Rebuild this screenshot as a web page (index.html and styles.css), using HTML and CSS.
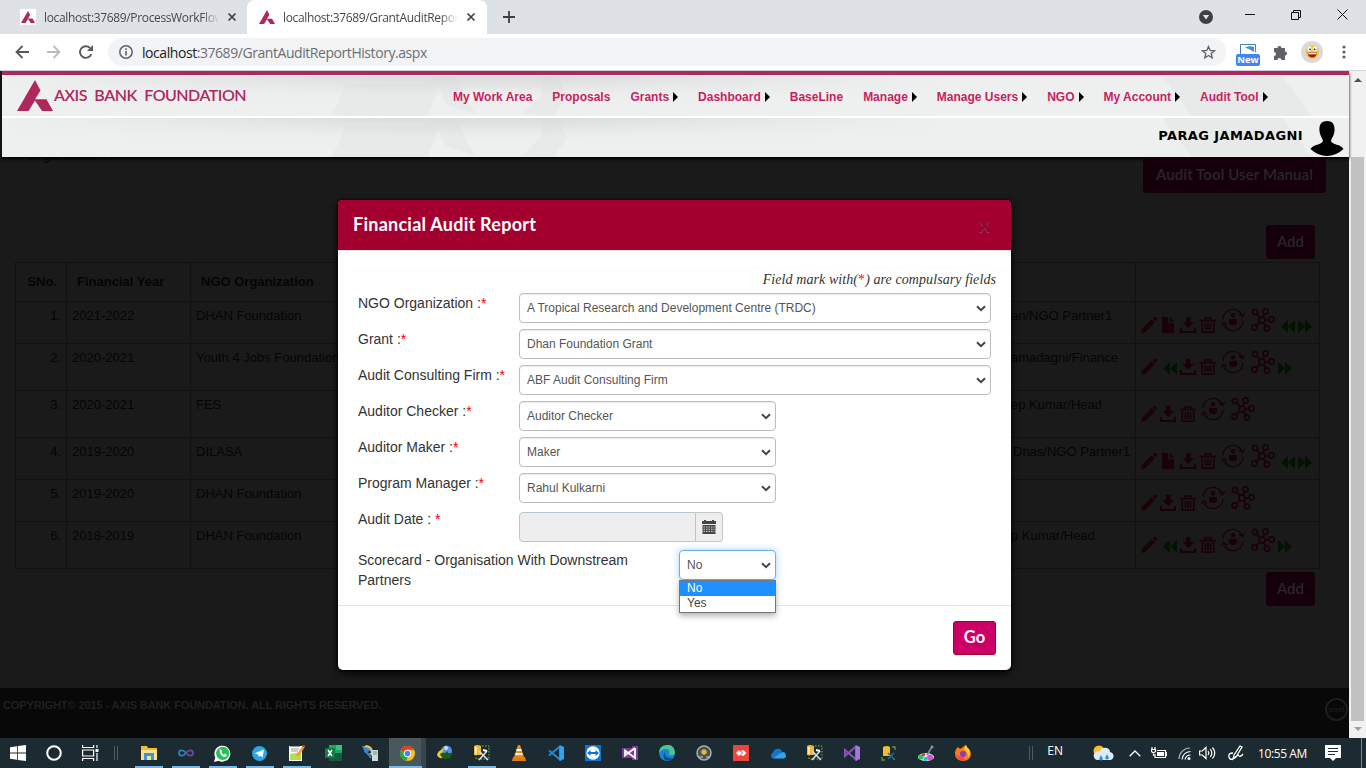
FILE: index.html
```html
<!DOCTYPE html>
<html lang="en">
<head>
<meta charset="utf-8">
<title>Grant Audit Report History</title>
<link rel="stylesheet" href="styles.css">
</head>
<body>
<svg class="defs" aria-hidden="true">
  <symbol id="axis" viewBox="0 0 36 31"><path fill="#ae285d" d="M18 0l5.500 10.500L18 19.200h11.500L36 31H25l-7-10.500L11.500 31H0z"/></symbol>
  <symbol id="x" viewBox="0 0 10 10"><path d="M1.500 1.500l7 7m0-7l-7 7" stroke="#3c4043" stroke-width="1.700"/></symbol>
  <symbol id="chev" viewBox="0 0 10 7"><path d="M1 1.200l4 4 4-4" fill="none" stroke="#444" stroke-width="2"/></symbol>
  <symbol id="pencil" viewBox="0 0 16 16"><path fill="#190404" d="M0 16l1.200-4.500L10.800 2l3.200 3.200L4.500 14.800zM11.800 1.200L13 0h2l1 1v2l-1.200 1.300z"/></symbol>
  <symbol id="doc" viewBox="0 0 12 16"><path fill="#1a000b" d="M0 0h6v6h6v10H0zM7.500 0L12 4.600H7.500z"/></symbol>
  <symbol id="down" viewBox="0 0 16 16"><path fill="#1a000b" d="M6 0h4.500v5H14L8.300 11 2.500 5H6zM0 11h2v3h12v-3h2v5H0z"/></symbol>
  <symbol id="trash" viewBox="0 0 16 16"><path fill="none" stroke="#1a000b" stroke-width="1.700" d="M0 3.700h16M5 3V1h6v2M2.200 5v10.200h11.600V5M5.500 6v7M8 6v7M10.500 6v7"/></symbol>
  <symbol id="cycle" viewBox="0 0 24 24"><path fill="none" stroke="#1a000b" stroke-width="1.300" d="M2 11A10 10 0 0121 7M22 13A10 10 0 013 17M18 6l3.500 2.500L24 5M0 18l2.500-3.500L6 17"/><circle cx="12" cy="7.300" r="2.200" fill="#1a000b"/><path fill="#1a000b" d="M8 11h8v4l-2 2H10l-2-2z"/></symbol>
  <symbol id="net" viewBox="0 0 24 24"><g fill="none" stroke="#1a000b" stroke-width="1.600"><circle cx="11" cy="12" r="3"/><circle cx="4" cy="4" r="2.600"/><circle cx="14.500" cy="3.500" r="2.600"/><circle cx="20.500" cy="11.500" r="2.600"/><circle cx="16" cy="20.500" r="2.600"/><circle cx="3.500" cy="19.500" r="2.600"/><path d="M6 6l3 4M13.500 6L12 9M14 12h4M12.500 15l2.500 3M9 14l-4 4"/></g></symbol>
  <symbol id="ff" viewBox="0 0 14 13"><path fill="#001400" d="M0 0l7 6.500L0 13zM7 0l7 6.500L7 13z"/></symbol>
  <symbol id="rw" viewBox="0 0 14 13"><path fill="#001400" d="M14 0L7 6.500 14 13zM7 0L0 6.500 7 13z"/></symbol>
  <symbol id="dbtool" viewBox="0 0 16 16"><path fill="#e9b940" d="M0 1q3-2 7 0v9H0z"/><path fill="#ffe9a5" d="M1 2h2v7H1z"/><path fill="none" stroke="#7bc143" stroke-dasharray="1.500" d="M8 1h7v13H2v-4"/><path d="M5 6l9 9M13 6l-8 9" stroke="#d6dde4" stroke-width="1.600"/><path d="M9 5l4 1" stroke="#fff" stroke-width="2"/></symbol>
</svg>

<div class="tabstrip">
  <div class="tab idle"><span class="fav"><svg width="14" height="12"><use href="#axis"/></svg></span><span class="tab-text">localhost:37689/ProcessWorkFlow</span><svg class="tab-x" width="10" height="10"><use href="#x"/></svg></div>
  <div class="tab active"><span class="fav"><svg width="16" height="14"><use href="#axis"/></svg></span><span class="tab-text">localhost:37689/GrantAuditReport</span><svg class="tab-x" width="10" height="10"><use href="#x"/></svg></div>
  <svg class="plus" width="12" height="12" viewBox="0 0 12 12"><path d="M6 0v12M0 6h12" stroke="#3c4043" stroke-width="1.800"/></svg>
  <div class="winbtns">
    <svg width="14" height="14" viewBox="0 0 14 14"><circle cx="7" cy="7" r="7" fill="#3c4043"/><path d="M3.800 5h6.400L7 9.500z" fill="#dee1e6"/></svg>
    <svg width="10" height="10" viewBox="0 0 10 10"><path d="M0 4.500h10" stroke="#111"/></svg>
    <svg width="10" height="10" viewBox="0 0 10 10"><path fill="none" stroke="#111" d="M.5 2.500h7v7h-7zM2.500 2.500v-2h7v7h-2"/></svg>
    <svg width="11" height="11" viewBox="0 0 11 11"><path d="M.5.5l10 10m0-10l-10 10" stroke="#111"/></svg>
  </div>
</div>
<div class="toolbar">
  <svg class="nav-ic" width="14" height="14" viewBox="0 0 14 14"><path d="M14 7H1.500M7.500 1l-6 6 6 6" fill="none" stroke="#55585d" stroke-width="1.800"/></svg>
  <svg class="nav-ic" width="14" height="14" viewBox="0 0 14 14"><path d="M0 7h12.500M6.500 1l6 6-6 6" fill="none" stroke="#babcbe" stroke-width="1.800"/></svg>
  <svg class="nav-ic" width="14" height="14" viewBox="0 0 14 14"><path d="M12.300 9A5.800 5.800 0 1111 3" fill="none" stroke="#55585d" stroke-width="1.900"/><path d="M14 0v6H8z" fill="#55585d"/></svg>
  <div class="omnibox">
    <svg width="14" height="14" viewBox="0 0 14 14"><circle cx="7" cy="7" r="6.200" fill="none" stroke="#5f6368" stroke-width="1.500"/><path d="M7 6v4.500M7 3.300v1.600" stroke="#5f6368" stroke-width="1.600"/></svg>
    <span class="url"><b>localhost</b>:37689/GrantAuditReportHistory.aspx</span>
    <svg class="star" width="15" height="14" viewBox="0 0 15 14"><path d="M7.500 1.500l1.700 4 4.300.3-3.300 2.800 1 4.200-3.700-2.300-3.700 2.300 1-4.200L1.500 5.800l4.300-.3z" fill="none" stroke="#5f6368" stroke-width="1.300"/></svg>
  </div>
  <div class="ext"><svg width="16" height="10" viewBox="0 0 16 10"><path d="M.5 10V.5h15V8" fill="#fff" stroke="#3986b8"/><path d="M5 3.500q5-2 9-.5v5Q10 5 5 3.500z" fill="#4a90c0"/></svg><span class="new">New</span></div>
  <svg class="puzzle" width="15" height="15" viewBox="0 0 15 15"><path fill="#5f6368" d="M1 3h3.500a2 2 0 114 0H12v3.500a2 2 0 110 4V15H8.500a1.900 1.900 0 10-4 0H1v-4a1.800 1.800 0 100-4z"/></svg>
  <svg class="avatar" width="22" height="22" viewBox="0 0 22 22"><circle cx="11" cy="11" r="11" fill="#d9d9dc"/><circle cx="11.300" cy="11.300" r="6.800" fill="#f5c73e"/><ellipse cx="8.500" cy="8" rx="2" ry="2.400" fill="#fff"/><ellipse cx="14" cy="8" rx="2" ry="2.400" fill="#fff"/><circle cx="9" cy="8.400" r=".8"/><circle cx="13.700" cy="8.400" r=".8"/><path d="M6.500 11.500h9.500q-.6 5-4.700 5t-4.800-5z" fill="#9b1717"/><path d="M7.200 11.800h8.200v1.500H7.200z" fill="#fff"/></svg>
  <svg class="dots" width="4" height="14" viewBox="0 0 4 14"><g fill="#5f6368"><circle cx="2" cy="2" r="1.600"/><circle cx="2" cy="7" r="1.600"/><circle cx="2" cy="12" r="1.600"/></g></svg>
</div>

<div class="viewport">
  <main class="page">
    <header class="site">
      <div class="band top">
        <svg class="facets" width="1347" height="40"><g fill="#d5d5d5" opacity=".22"><path d="M344 8h76L440 0l-14 40H330zM433 0h20l20 38-30-10zM520 38l20-20V0h15l10 20-13 20zM1160 0h120l30 40H1190z"/></g></svg>
        <svg class="logo" width="36" height="31"><use href="#axis"/></svg>
        <span class="brand">AXIS BANK FOUNDATION</span>
        <nav class="menu">
          <a>My Work Area</a><a>Proposals</a><a class="sub">Grants</a><a class="sub">Dashboard</a><a>BaseLine</a><a class="sub">Manage</a><a class="sub">Manage Users</a><a class="sub">NGO</a><a class="sub">My Account</a><a class="sub">Audit Tool</a>
        </nav>
      </div>
      <div class="band bottom">
        <svg class="facets" width="1347" height="39"><g fill="#d5d5d5" opacity=".22"><path d="M344 8h76L440 0l-14 39H330zM433 0h20l20 38-30-10zM520 38l20-20V0h15l10 20-13 19zM1160 0h120l30 39H1190z"/></g></svg>
        <span class="user">PARAG JAMADAGNI</span>
        <svg class="person" width="34" height="36" viewBox="0 0 34 36"><path d="M17 1c6 0 8 4 7.500 10-.4 5-3 7-3.500 10 1 4 10 3 12.500 8Q26 36 17 36T.5 29C3 24 12 25 13 21c-.5-3-3-5-3.500-10C9 5 11 1 17 1z"/></svg>
      </div>
    </header>
    <section class="content">
      <div class="subhead"><span class="org">Organization :</span><span class="dbtn manual">Audit Tool User Manual</span></div>
      <div class="addrow"><span class="dbtn">Add</span></div>
      <div class="grid">
        <div class="row head"><span class="no">SNo.</span><span class="yr">Financial Year</span><span class="ngo">NGO Organization</span><span class="who"></span><span class="act"></span></div>
        <div class="row short"><span class="no">1.</span><span class="yr">2021-2022</span><span class="ngo">DHAN Foundation</span><span class="who">an/NGO Partner1</span><span class="act"><svg class="i"><use href="#pencil"/></svg><svg class="i"><use href="#doc"/></svg><svg class="i"><use href="#down"/></svg><svg class="i"><use href="#trash"/></svg><svg class="big"><use href="#cycle"/></svg><svg class="big"><use href="#net"/></svg><svg class="seek"><use href="#rw"/></svg><svg class="seek"><use href="#ff"/></svg></span></div>
        <div class="row tall"><span class="no">2.</span><span class="yr">2020-2021</span><span class="ngo">Youth 4 Jobs Foundation</span><span class="who">amadagni/Finance</span><span class="act"><svg class="i"><use href="#pencil"/></svg><svg class="seek in"><use href="#rw"/></svg><svg class="i"><use href="#down"/></svg><svg class="i"><use href="#trash"/></svg><svg class="big"><use href="#cycle"/></svg><svg class="big tight"><use href="#net"/></svg><svg class="seek"><use href="#ff"/></svg></span></div>
        <div class="row tall"><span class="no">3.</span><span class="yr">2020-2021</span><span class="ngo">FES</span><span class="who">ep Kumar/Head</span><span class="act"><svg class="i"><use href="#pencil"/></svg><svg class="i"><use href="#down"/></svg><svg class="i"><use href="#trash"/></svg><svg class="big"><use href="#cycle"/></svg><svg class="big"><use href="#net"/></svg></span></div>
        <div class="row short"><span class="no">4.</span><span class="yr">2019-2020</span><span class="ngo">DILASA</span><span class="who dhas">Dhas/NGO Partner1</span><span class="act"><svg class="i"><use href="#pencil"/></svg><svg class="i"><use href="#doc"/></svg><svg class="i"><use href="#down"/></svg><svg class="i"><use href="#trash"/></svg><svg class="big"><use href="#cycle"/></svg><svg class="big"><use href="#net"/></svg><svg class="seek"><use href="#rw"/></svg><svg class="seek"><use href="#ff"/></svg></span></div>
        <div class="row short"><span class="no">5.</span><span class="yr">2019-2020</span><span class="ngo">DHAN Foundation</span><span class="who"></span><span class="act"><svg class="i"><use href="#pencil"/></svg><svg class="i"><use href="#down"/></svg><svg class="i"><use href="#trash"/></svg><svg class="big"><use href="#cycle"/></svg><svg class="big"><use href="#net"/></svg></span></div>
        <div class="row tall"><span class="no">6.</span><span class="yr">2018-2019</span><span class="ngo">DHAN Foundation</span><span class="who last">p Kumar/Head</span><span class="act"><svg class="i"><use href="#pencil"/></svg><svg class="seek in"><use href="#rw"/></svg><svg class="i"><use href="#down"/></svg><svg class="i"><use href="#trash"/></svg><svg class="big"><use href="#cycle"/></svg><svg class="big tight"><use href="#net"/></svg><svg class="seek"><use href="#ff"/></svg></span></div>
      </div>
      <div class="addrow low"><span class="dbtn">Add</span></div>
    </section>
    <footer class="foot"><span>COPYRIGHT© 2015 - AXIS BANK FOUNDATION. ALL RIGHTS RESERVED.</span><i class="seal">pixel</i></footer>

    <div class="modal">
      <div class="modal-head"><h1>Financial Audit Report</h1><span class="close">x</span></div>
      <div class="modal-body">
        <p class="hint">Field mark with(<em>*</em>) are compulsary fields</p>
        <div class="field"><label>NGO Organization :<em>*</em></label><div class="sel wide">A Tropical Research and Development Centre (TRDC)<svg width="10" height="7"><use href="#chev"/></svg></div></div>
        <div class="field"><label>Grant :<em>*</em></label><div class="sel wide">Dhan Foundation Grant<svg width="10" height="7"><use href="#chev"/></svg></div></div>
        <div class="field"><label>Audit Consulting Firm :<em>*</em></label><div class="sel wide">ABF Audit Consulting Firm<svg width="10" height="7"><use href="#chev"/></svg></div></div>
        <div class="field"><label>Auditor Checker :<em>*</em></label><div class="sel">Auditor Checker<svg width="10" height="7"><use href="#chev"/></svg></div></div>
        <div class="field"><label>Auditor Maker :<em>*</em></label><div class="sel">Maker<svg width="10" height="7"><use href="#chev"/></svg></div></div>
        <div class="field"><label>Program Manager :<em>*</em></label><div class="sel">Rahul Kulkarni<svg width="10" height="7"><use href="#chev"/></svg></div></div>
        <div class="field date"><label>Audit Date : <em>*</em></label><div class="dateinput"></div><div class="cal"><svg width="14" height="14" viewBox="0 0 14 14"><path fill="#444" d="M0 1h2V0h2v1h6V0h2v1h2v3H0zM.5 5h13v9H.5z"/><path d="M1.500 7h11M1.500 9.200h11M1.500 11.400h11" stroke="#ddd" stroke-width="1" stroke-dasharray="1.500 1"/></svg></div></div>
        <div class="field score"><label>Scorecard - Organisation With Downstream Partners</label><div class="pick"><div class="sel focus">No<svg width="10" height="7"><use href="#chev"/></svg></div><div class="options"><div class="opt on">No</div><div class="opt">Yes</div></div></div></div>
      </div>
      <div class="modal-foot"><span class="go">Go</span></div>
    </div>
  </main>
  <div class="scrollbar"><svg width="8" height="4" viewBox="0 0 8 4"><path d="M0 4l4-4 4 4z" fill="#505050"/></svg><div class="thumb"></div><svg width="8" height="4" viewBox="0 0 8 4"><path d="M0 0l4 4 4-4z" fill="#a0a0a0"/></svg></div>
</div>

<div class="taskbar">
  <div class="cell sys"><svg width="16" height="16" viewBox="0 0 16 16"><path fill="#fff" d="M0 2.200l7-1v6.400H0zM7.800 1.100L16 0v7.600H7.800zM0 8.400h7v6.400l-7-1zM7.800 8.400H16V16l-8.200-1.100z"/></svg></div>
  <div class="cell sys"><svg width="16" height="16" viewBox="0 0 16 16"><circle cx="8" cy="8" r="6.800" fill="none" stroke="#fff" stroke-width="2"/></svg></div>
  <div class="cell sys"><svg width="17" height="16" viewBox="0 0 17 16"><path fill="none" stroke="#fff" stroke-width="1.200" d="M.6 0v2.500h11V0M.6 5h11v6H.6zM.6 16v-2.500h11V16M15 0v3M15 8v8"/><path fill="#fff" d="M13.500 4h3v3h-3z"/></svg></div>
  <div class="sep"></div>
  <div class="cell run"><svg width="16" height="16" viewBox="0 0 16 16"><path fill="#f5b83d" d="M0 1h6l1 2h9v12H0z"/><path fill="#ffe08a" d="M0 5h16v10H0z"/><path fill="#3a96dd" d="M3 8h10v7h-3v-4H6v4H3z"/></svg></div>
  <div class="cell run"><svg width="16" height="16" viewBox="0 0 16 16"><path d="M8 8C5 4 1 5 1 8s4 4 7 0" fill="none" stroke="#2f7fc4" stroke-width="1.800"/><path d="M8 8c3-4 7-3 7 0s-4 4-7 0" fill="none" stroke="#70479f" stroke-width="1.800"/></svg></div>
  <div class="cell run"><svg width="17" height="17" viewBox="0 0 17 17"><path fill="#fff" d="M0 17l1.300-4.500a8 8 0 113.200 3.200z"/><circle cx="8.700" cy="8.300" r="6.600" fill="#25c353"/><path fill="#fff" d="M5.500 5l1-1 1.500 2-.6 1.200q.8 1.800 2.500 2.500l1-1 2 1.300q-.5 2-2.500 2Q6 11 5.500 5z"/></svg></div>
  <div class="cell run"><svg width="15" height="15" viewBox="0 0 15 15"><circle cx="7.500" cy="7.500" r="7.500" fill="#2ca5e0"/><path fill="#fff" d="M2.500 7.300L12 3.500l-1.500 8-2.300-1.700-1.500 1.300-.3-2.500z"/></svg></div>
  <div class="cell run"><svg width="16" height="16" viewBox="0 0 16 16"><path fill="#fff" d="M0 1h13v15H0z"/><path d="M2 0v2m2-2v2m2-2v2m2-2v2m2-2v2" stroke="#333"/><path fill="#b7db54" d="M1 9l11-2v8H1z"/><path d="M2 4h8M2 6h7" stroke="#999"/><path d="M15 1L8 11" stroke="#f0a020" stroke-width="2.500"/><path d="M15.500 0l-1 2" stroke="#c33" stroke-width="2"/></svg></div>
  <div class="cell"><svg width="17" height="16" viewBox="0 0 17 16"><path fill="#21a366" d="M4 0h13v16H4z"/><path fill="#185c37" d="M4 8h13v8H4z"/><path fill="#33c481" d="M11 0h6v5h-6z"/><path fill="#107c41" d="M0 3h10v10H0z"/><path d="M3 5l4 6m0-6l-4 6" stroke="#fff" stroke-width="1.500"/></svg></div>
  <div class="cell"><svg width="17" height="16" viewBox="0 0 17 16"><path d="M0 1h7l3 4-7 3z" fill="#3b84d0"/><path d="M3 6L7 10l2 3" stroke="#3b84d0" stroke-width="2" fill="none"/><path d="M2 2q7 0 7 6H7l3 3 3-4h-2Q11 1 4 0z" fill="#f4c43c"/><path fill="#cfd8dc" d="M10 5h6v11h-6z"/><path d="M11 7h4M11 9h4" stroke="#698"/></svg></div>
  <div class="cell hot"><svg width="15" height="15" viewBox="0 0 16 16"><circle cx="8" cy="8" r="8" fill="#fbc116"/><path fill="#e33b2e" d="M1 4a8 8 0 0114 0H8L5 9z"/><path fill="#2ba24c" d="M1 4l4 6 3 2-1 4A8 8 0 011 4z"/><circle cx="8" cy="8" r="4" fill="#fff"/><circle cx="8" cy="8" r="3" fill="#4285f4"/></svg></div>
  <div class="cell"><svg width="16" height="16" viewBox="0 0 16 16"><circle cx="9.500" cy="6" r="5.500" fill="#5a8ddb"/><circle cx="9" cy="3" r="2" fill="#cde"/><path d="M0 10Q1 5 7 4L5 8q2 2 4 4-7 3-9-2z" fill="#f0c93a"/><path d="M3 9q2-2 5-1l3-2v2h5l-3 4 2 1-7 1q-4-1-5-5z" fill="#1d5c17"/></svg></div>
  <div class="cell run"><svg width="16" height="16"><use href="#dbtool"/></svg></div>
  <div class="cell"><svg width="14" height="16" viewBox="0 0 14 16"><path fill="#f28a1c" d="M6 0h2l4 12H2z"/><path stroke="#fff" stroke-width="2" d="M4.500 5h5M3.500 9h7"/><path fill="#e97912" d="M1 12h12l1 4H0z"/></svg></div>
  <div class="cell"><svg width="16" height="16" viewBox="0 0 16 16"><path d="M12 1.500v13L1 5.500M12 1.500L1 10.500" fill="none" stroke="#1e8ad6" stroke-width="2"/><path fill="#2fa5ef" d="M11.500 0L16 2v12l-4.500 2z"/></svg></div>
  <div class="cell"><svg width="16" height="16" viewBox="0 0 16 16"><path fill="#0e74d4" d="M0 0h16v16H0z"/><circle cx="8" cy="8" r="6.700" fill="#fff"/><path fill="#0e74d4" d="M2 8l3.500-3v2h5V5L14 8l-3.500 3V9h-5v2z"/></svg></div>
  <div class="cell"><svg width="16" height="14" viewBox="0 0 16 14"><path fill="#7d3c98" d="M0 2h16v10H0zM10 0h6v14h-6z"/><path fill="none" stroke="#fff" stroke-width="1.800" d="M13 2v10L3 4.500v5L13 2"/></svg></div>
  <div class="cell"><svg width="16" height="16" viewBox="0 0 16 16"><circle cx="8" cy="8" r="8" fill="#1785d1"/><path fill="#4bc58d" d="M4 1q10-4 12 6 0 4-6 3 2-6-4-6Q3 4 0 8 0 3 4 1z"/><path fill="#0b4f93" d="M6 7q-1 7 8 6-3 4-8 2-3-5 0-8z"/></svg></div>
  <div class="cell"><svg width="16" height="16" viewBox="0 0 16 16"><circle cx="8" cy="8" r="7" fill="#4b5356" stroke="#a7afb2" stroke-width="1.500"/><path d="M8 4v6M5 7h6M6 5l4 4M10 5L6 9" stroke="#e3bb35" stroke-width="1.300"/><path d="M3 12h4M10 12h3" stroke="#c9d2d6"/></svg></div>
  <div class="cell"><svg width="16" height="16" viewBox="0 0 16 16"><path fill="#ef443b" d="M0 0h16v16H0z"/><path fill="#fff" d="M6 5l3 3-3 3-3-3z"/><path d="M8.500 5.500L11 8l-2.500 2.500M10 5.500L12.500 8 10 10.500" fill="none" stroke="#fff" stroke-width="1.300"/></svg></div>
  <div class="cell"><svg width="16" height="11" viewBox="0 0 16 11"><path fill="#1176c9" d="M3 10.500a3.200 3.200 0 010-6A5 5 0 0112 3l-4 6z"/><path fill="#31a4ee" d="M3 10.500L9 6q6-5 7 2 0 2.500-3 2.500z"/></svg></div>
  <div class="cell"><svg width="16" height="16"><use href="#dbtool"/></svg></div>
  <div class="cell"><svg width="16" height="16" viewBox="0 0 16 16"><path d="M12 1.500v13L1 5v6L12 1.500" fill="none" stroke="#8653b8" stroke-width="2"/><path fill="#a776dc" d="M11.500 0L16 2v12l-4.500 2z"/></svg></div>
  <div class="cell"><svg width="15" height="15" viewBox="0 0 15 15"><path fill="#efc02c" d="M2 1q4-2 7 0v9H2z"/><path fill="none" stroke="#529a31" stroke-width="1.400" d="M11 1h3v3M1 11v3h3M13 12v2"/><path d="M7 7l6 6M13 7l-6 6" stroke="#266da0" stroke-width="1.500"/></svg></div>
  <div class="cell"><svg width="16" height="16" viewBox="0 0 16 16"><ellipse cx="8" cy="12" rx="8" ry="4" fill="#e7e7ec"/><circle cx="3" cy="12" r="2.600" fill="#29c46b"/><circle cx="7.500" cy="14" r="2" fill="#29b6dc"/><circle cx="12" cy="12.500" r="3" fill="#d952d1"/><circle cx="5.500" cy="9.500" r="1.800" fill="#e93a3a"/><path d="M14.500 1L9 10" stroke="#788999" stroke-width="1.600"/><circle cx="14" cy="2" r="1.500" fill="#9a88b5"/></svg></div>
  <div class="cell"><svg width="16" height="16" viewBox="0 0 16 16"><path fill="#ff7a1a" d="M8 2q2-2 3-2 0 2 2 3 3 3 3 6a8 7 0 01-16 0Q0 4 3 2l2 2z"/><path fill="#ffcf3b" d="M11 0q1 3 3 4 2 5-1 8 0-5-4-8z"/><circle cx="8" cy="9" r="3" fill="#7b3fc5"/><path fill="#ff4354" d="M1 9q3 3 7 3l2 3Q3 17 1 9z"/></svg></div>
  <div class="tray">
    <div class="sep"></div>
    <span class="lang">EN</span>
    <svg class="weather" width="21" height="17" viewBox="0 0 21 17"><circle cx="6" cy="6" r="5.500" fill="#f8bd32"/><path fill="#dcebf7" d="M4 15a4.300 4.300 0 01-1-8q2-2 4-1 2-4 7-3 3 1 3 4 4 1 3.500 5-1 3-3.500 3z"/><path fill="#2d8fdd" d="M8 10l2 4q-2 3-4 0zM14 9l2 4q-2 3-4 0z"/></svg>
    <svg class="up" width="12" height="7" viewBox="0 0 12 7"><path d="M.7 6.300L6 1l5.300 5.300" fill="none" stroke="#fff" stroke-width="1.300"/></svg>
    <svg class="bat" width="16" height="12" viewBox="0 0 16 12"><path fill="none" stroke="#fff" stroke-width="1.200" d="M6 3.500h8.500v7H4V7M1 0v2M4 0v2M.5 2.500h4v2l-2 1.500-2-1.500zM2.500 6v3M15.500 5v4"/><path fill="#fff" d="M6 5h7v4H6z"/></svg>
    <svg class="wifi" width="13" height="13" viewBox="0 0 13 13"><g fill="none" stroke="#fff" stroke-width="1.200"><path d="M1 12A11 11 0 0112 1" opacity=".6"/><path d="M4 12.500Q5 5 12.500 4.500M7 12.500Q8 8 12.500 8"/></g><circle cx="11" cy="11.500" r="1.500" fill="#fff"/></svg>
    <svg class="vol" width="17" height="14" viewBox="0 0 17 14"><path fill="none" stroke="#fff" stroke-width="1.200" d="M.6 5v4h2.700L7 12.500v-11L3.300 5zM9 5q1.500 2 0 4M11.300 3q3 4 0 8M13.500 1.500q4.500 5.500 0 11"/></svg>
    <svg class="pen" width="16" height="16" viewBox="0 0 16 16"><path fill="none" stroke="#fff" stroke-width="1.300" d="M5 14l1-4 6-9 2 1-6 10zM5 8q-5 0-4 4t5 1 4-3q2 3 5-1"/></svg>
    <span class="clock">10:55 AM</span>
    <svg class="note" width="16" height="16" viewBox="0 0 16 16"><path fill="#fff" d="M0 0h16v13h-5l-3 3-3-3H0z"/><path d="M3 3.500h10M3 6.500h10M3 9.500h7" stroke="#1c2d33" stroke-width="1.200"/></svg>
    <div class="peek"></div>
  </div>
</div>
</body>
</html>
```
FILE: styles.css
```css
* { box-sizing: border-box; }
body { margin: 0; width: 1366px; height: 768px; overflow: hidden; display: flex; flex-direction: column; font-family: "Liberation Sans", Arial, sans-serif; }
svg { display: block; flex: none; }
.defs { position: absolute; width: 0; height: 0; }
em { font-style: normal; color: #f00; }

/* browser chrome */
.tabstrip { height: 34px; flex: none; background: #dee1e6; display: flex; align-items: center; font-family: "Open Sans", sans-serif; }
.tab { display: flex; align-items: center; height: 34px; color: #45484c; font-size: 12px; }
.tab.idle { width: 247px; padding-left: 20px; }
.tab.active { width: 240px; padding-left: 12px; background: #fff; border-radius: 8px 8px 0 0; }
.fav { width: 16px; height: 16px; background: #fff; display: flex; align-items: center; justify-content: center; margin-right: 8px; flex: none; }
.tab-text { width: 175px; overflow: hidden; white-space: nowrap; letter-spacing: -0.36px; -webkit-mask-image: linear-gradient(90deg, #000 90%, transparent); }
.tab-x { margin-left: 8px; }
.plus { margin-left: 16px; }
.winbtns { margin-left: auto; display: flex; align-items: center; padding: 0 18px 5px 0; gap: 36px; }
.winbtns svg:first-child { margin: 5px -4px 0 0; }
.toolbar { height: 37px; flex: none; background: #fff; border-bottom: 1px solid #d5d7da; display: flex; align-items: center; padding-left: 15px; }
.nav-ic { margin-right: 18px; }
.nav-ic + .nav-ic + .nav-ic { margin-right: 15px; }
.omnibox { width: 1118px; height: 28px; border-radius: 14px; background: #f1f3f4; display: flex; align-items: center; padding: 0 10px 0 11px; }
.url { margin-left: 9px; font: 14px "Open Sans", sans-serif; letter-spacing: -0.44px; color: #6b6f74; }
.url b { font-weight: 400; color: #202124; }
.star { margin-left: auto; }
.ext { margin-left: 10px; width: 24px; display: flex; flex-direction: column; align-items: center; padding-top: 5px; }
.new { width: 24px; height: 12px; background: #4285f4; color: #fff; border-radius: 2px; font: bold 9.5px/12px "Open Sans", sans-serif; text-align: center; }
.puzzle { margin-left: 13px; }
.avatar { margin-left: 13px; }
.dots { margin-left: 19px; }

/* page */
.viewport { height: 667px; flex: none; display: flex; }
.page { width: 1349px; display: flex; flex-direction: column; background: #1a1a1a; position: relative; }
.scrollbar { width: 17px; background: #f1f1f1; display: flex; flex-direction: column; align-items: center; padding: 7px 0; }
.thumb { width: 13px; height: 564px; margin: 75px 0 6px; background: #c1c1c1; }
.site { height: 86px; margin-left: 2px; border-top: 4px solid #ae285d; box-shadow: 0 2px 3px #000; }
.band { position: relative; display: flex; background: linear-gradient(90deg, #eef0f0, rgba(238,240,240,0) 30%, rgba(238,240,240,0) 40%, #eef0f0 70%), linear-gradient(#dadbdb, #eceeee 45%, #eef0f0 60%); }
.band.top { height: 43px; border-top: 1px solid #fff; border-bottom: 2px solid #fff; }
.band.bottom { height: 39px; align-items: center; justify-content: flex-end; }
.facets { position: absolute; left: 0; top: 0; }
.logo, .brand, .menu, .user, .person { position: relative; }
.logo { margin: 4px 0 0 15px; }
.brand { margin: 9px 0 0 1px; width: 394px; height: 20px; font: 600 16px/20px Lato, sans-serif; color: #ae285d; letter-spacing: -0.5px; word-spacing: 4px; white-space: nowrap; }
.menu { display: flex; height: 42px; align-items: center; font-size: 12px; font-weight: bold; color: #c81e5f; margin-left: 5px; gap: 20px; white-space: nowrap; }
.menu a { display: flex; align-items: center; }
.sub::after { content: ""; margin-left: 4px; border-left: 5px solid #000; border-top: 5px solid transparent; border-bottom: 5px solid transparent; }
.user { font: bold 13px "DejaVu Sans", sans-serif; letter-spacing: 0.4px; margin: 0 7px 4px 0; }
.person { margin-right: 5px; margin-top: 1px; }

.content { height: 531px; color: #050505; font-size: 13px; }
.subhead { display: flex; height: 68px; justify-content: space-between; align-items: flex-start; overflow: hidden; padding: 0 23px 0 27px; }
.org { font-size: 14px; line-height: 16px; margin-top: -10px; }
.dbtn { background: #15000a; color: #292629; border-radius: 3px; height: 34px; width: 49px; font: 600 15px/32px Lato, sans-serif; text-align: center; white-space: nowrap; }
.manual { width: 183px; height: 36px; line-height: 35px; letter-spacing: 0.1px; }
.addrow { display: flex; justify-content: flex-end; padding-right: 34px; height: 37px; }
.low { padding-top: 3px; }
.grid { margin-left: 15px; width: 1305px; border: 1px solid #111; border-top: 0; }
.row { display: flex; border-top: 1px solid #111; line-height: 18px; white-space: nowrap; }
.row.head { height: 39px; font-weight: bold; }
.short { height: 42px; }
.tall { height: 47px; }
.row > span { padding-top: 5px; }
.row.head > span { padding-top: 10px; }
.no { width: 51px; text-align: right; padding-right: 5px; border-right: 1px solid #111; }
.head .no { padding-right: 9px; }
.yr { width: 124px; padding-left: 5px; border-right: 1px solid #111; }
.head .yr, .head .ngo { padding-left: 10px; }
.ngo { width: 820px; padding-left: 5px; }
.who { width: 125px; border-right: 1px solid #111; }
.dhas { padding-left: 2px; }
.row > .act, .row.head > .act { display: flex; padding: 6px 0 0 5px; }
.i { width: 16px; height: 16px; margin: 9px 4px 0 0; }
.i + .i, .seek + .i { margin-left: -1px; margin-right: 5px; }
.big { width: 24px; height: 24px; margin-right: 6px; }
.tight { margin-right: 3px; }
.seek { width: 14px; height: 13px; margin: 12px 3px 0 0; }
.seek.in { margin: 12px 4px 0 2px; }
.foot { height: 50px; background: #080808; color: #202020; font: bold 11px/14px "Liberation Sans", sans-serif; letter-spacing: -0.1px; padding: 10px 0 0 3px; display: flex; justify-content: space-between; }
.seal { width: 23px; height: 23px; border: 2px solid #1d1d1d; border-radius: 50%; font: 8px/18px Lato, sans-serif; text-align: center; margin: 0 1px; }

/* dialog */
.modal { position: absolute; left: 338px; top: 129px; width: 673px; height: 470px; background: #fff; border-radius: 5px; box-shadow: 0 3px 8px #000, 0 0 2px #000; color: #333; }
.modal-head { height: 51px; background: #a3002f; border-radius: 4px 4px 0 0; border-bottom: 1px solid #e5e5e5; display: flex; justify-content: space-between; padding: 13px 21px 0 15px; }
h1 { margin: 0; color: #fff; font: bold 18px/22px Lato, sans-serif; letter-spacing: 0.25px; white-space: nowrap; }
.close { font: 22px/22px Lato, sans-serif; color: #7c0d2e; text-shadow: 0 1px 0 #b63860; }
.modal-body { height: 355px; padding: 19px 15px 0 20px; border-bottom: 1px solid #e5e5e5; }
.hint { margin: 0 0 3px; font: italic 14px/20px "Liberation Serif", serif; text-align: right; letter-spacing: 0.08px; white-space: nowrap; }
.field { display: flex; height: 36px; font-size: 14px; }
.field label { width: 161px; line-height: 20px; white-space: nowrap; }
.sel { width: 257px; height: 30px; border: 1px solid #bdbdbd; border-radius: 4px; font-size: 12px; color: #555; display: flex; align-items: center; justify-content: space-between; padding: 0 4px 0 7px; box-shadow: inset 0 1px 1px rgba(0,0,0,.08); background: #fff; }
.wide { width: 472px; }
.date { height: 41px; }
.dateinput { width: 177px; height: 30px; margin-top: 3px; background: #eee; border: 1px solid #b4c8d0; border-radius: 4px 0 0 4px; }
.cal { width: 27px; height: 30px; margin-top: 3px; border: 1px solid #c8c8c8; border-left: 0; border-radius: 0 4px 4px 0; background: #eee; display: flex; align-items: center; justify-content: center; padding-right: 1px; }
.score label { width: 321px; padding-right: 30px; white-space: normal; }
.pick { position: relative; width: 97px; }
.sel.focus { width: 97px; border-color: #66afe9; box-shadow: 0 0 7px rgba(102,175,233,.6); }
.options { position: absolute; left: 0; top: 30px; width: 97px; height: 33px; border: 1px solid #767676; background: #fff; box-shadow: 0 3px 6px rgba(0,0,0,.3); font-size: 12px; }
.opt { height: 15px; line-height: 15px; padding-left: 7px; color: #444; }
.on { background: #1e90ff; color: #fff; }
.modal-foot { display: flex; justify-content: flex-end; padding: 15px 15px 0; }
.go { width: 43px; height: 34px; background: #cc0066; border: 1px solid #a3002f; border-radius: 3px; color: #fff; font: bold 16.5px/30px Lato, sans-serif; text-align: center; }

/* taskbar */
.taskbar { height: 30px; flex: none; background: #1b2b31; display: flex; align-items: center; }
.cell { width: 37px; height: 30px; display: flex; align-items: center; justify-content: center; }
.cell.sys { width: 36px; }
.sep { width: 4px; height: 14px; border: 1px solid #4d5a5e; border-width: 0 1px; margin: 0 8px 0 6px; }
.taskbar > .sep { margin-right: 12px; }
.run { background: linear-gradient(#76b9ed, #76b9ed) center bottom / 28px 2px no-repeat; }
.hot { background: linear-gradient(#76b9ed, #76b9ed) 0 100% / 33px 2px no-repeat, linear-gradient(90deg, #4a575c 32px, #38464b 32px); }
.tray { margin-left: auto; height: 30px; display: flex; align-items: center; color: #fff; font: 12px "Open Sans", sans-serif; white-space: nowrap; }
.lang { margin: -5px 30px 0 6px; }
.weather { margin-right: 15px; }
.up { margin-right: 10px; }
.bat { margin-right: 11px; }
.wifi { margin-right: 8px; }
.vol { margin-right: 12px; }
.pen { margin-right: 14px; }
.clock { letter-spacing: -0.4px; width: 50px; }
.note { margin-left: 17px; }
.peek { width: 5px; height: 30px; margin-left: 20px; border-left: 1px solid #79858a; }
```
